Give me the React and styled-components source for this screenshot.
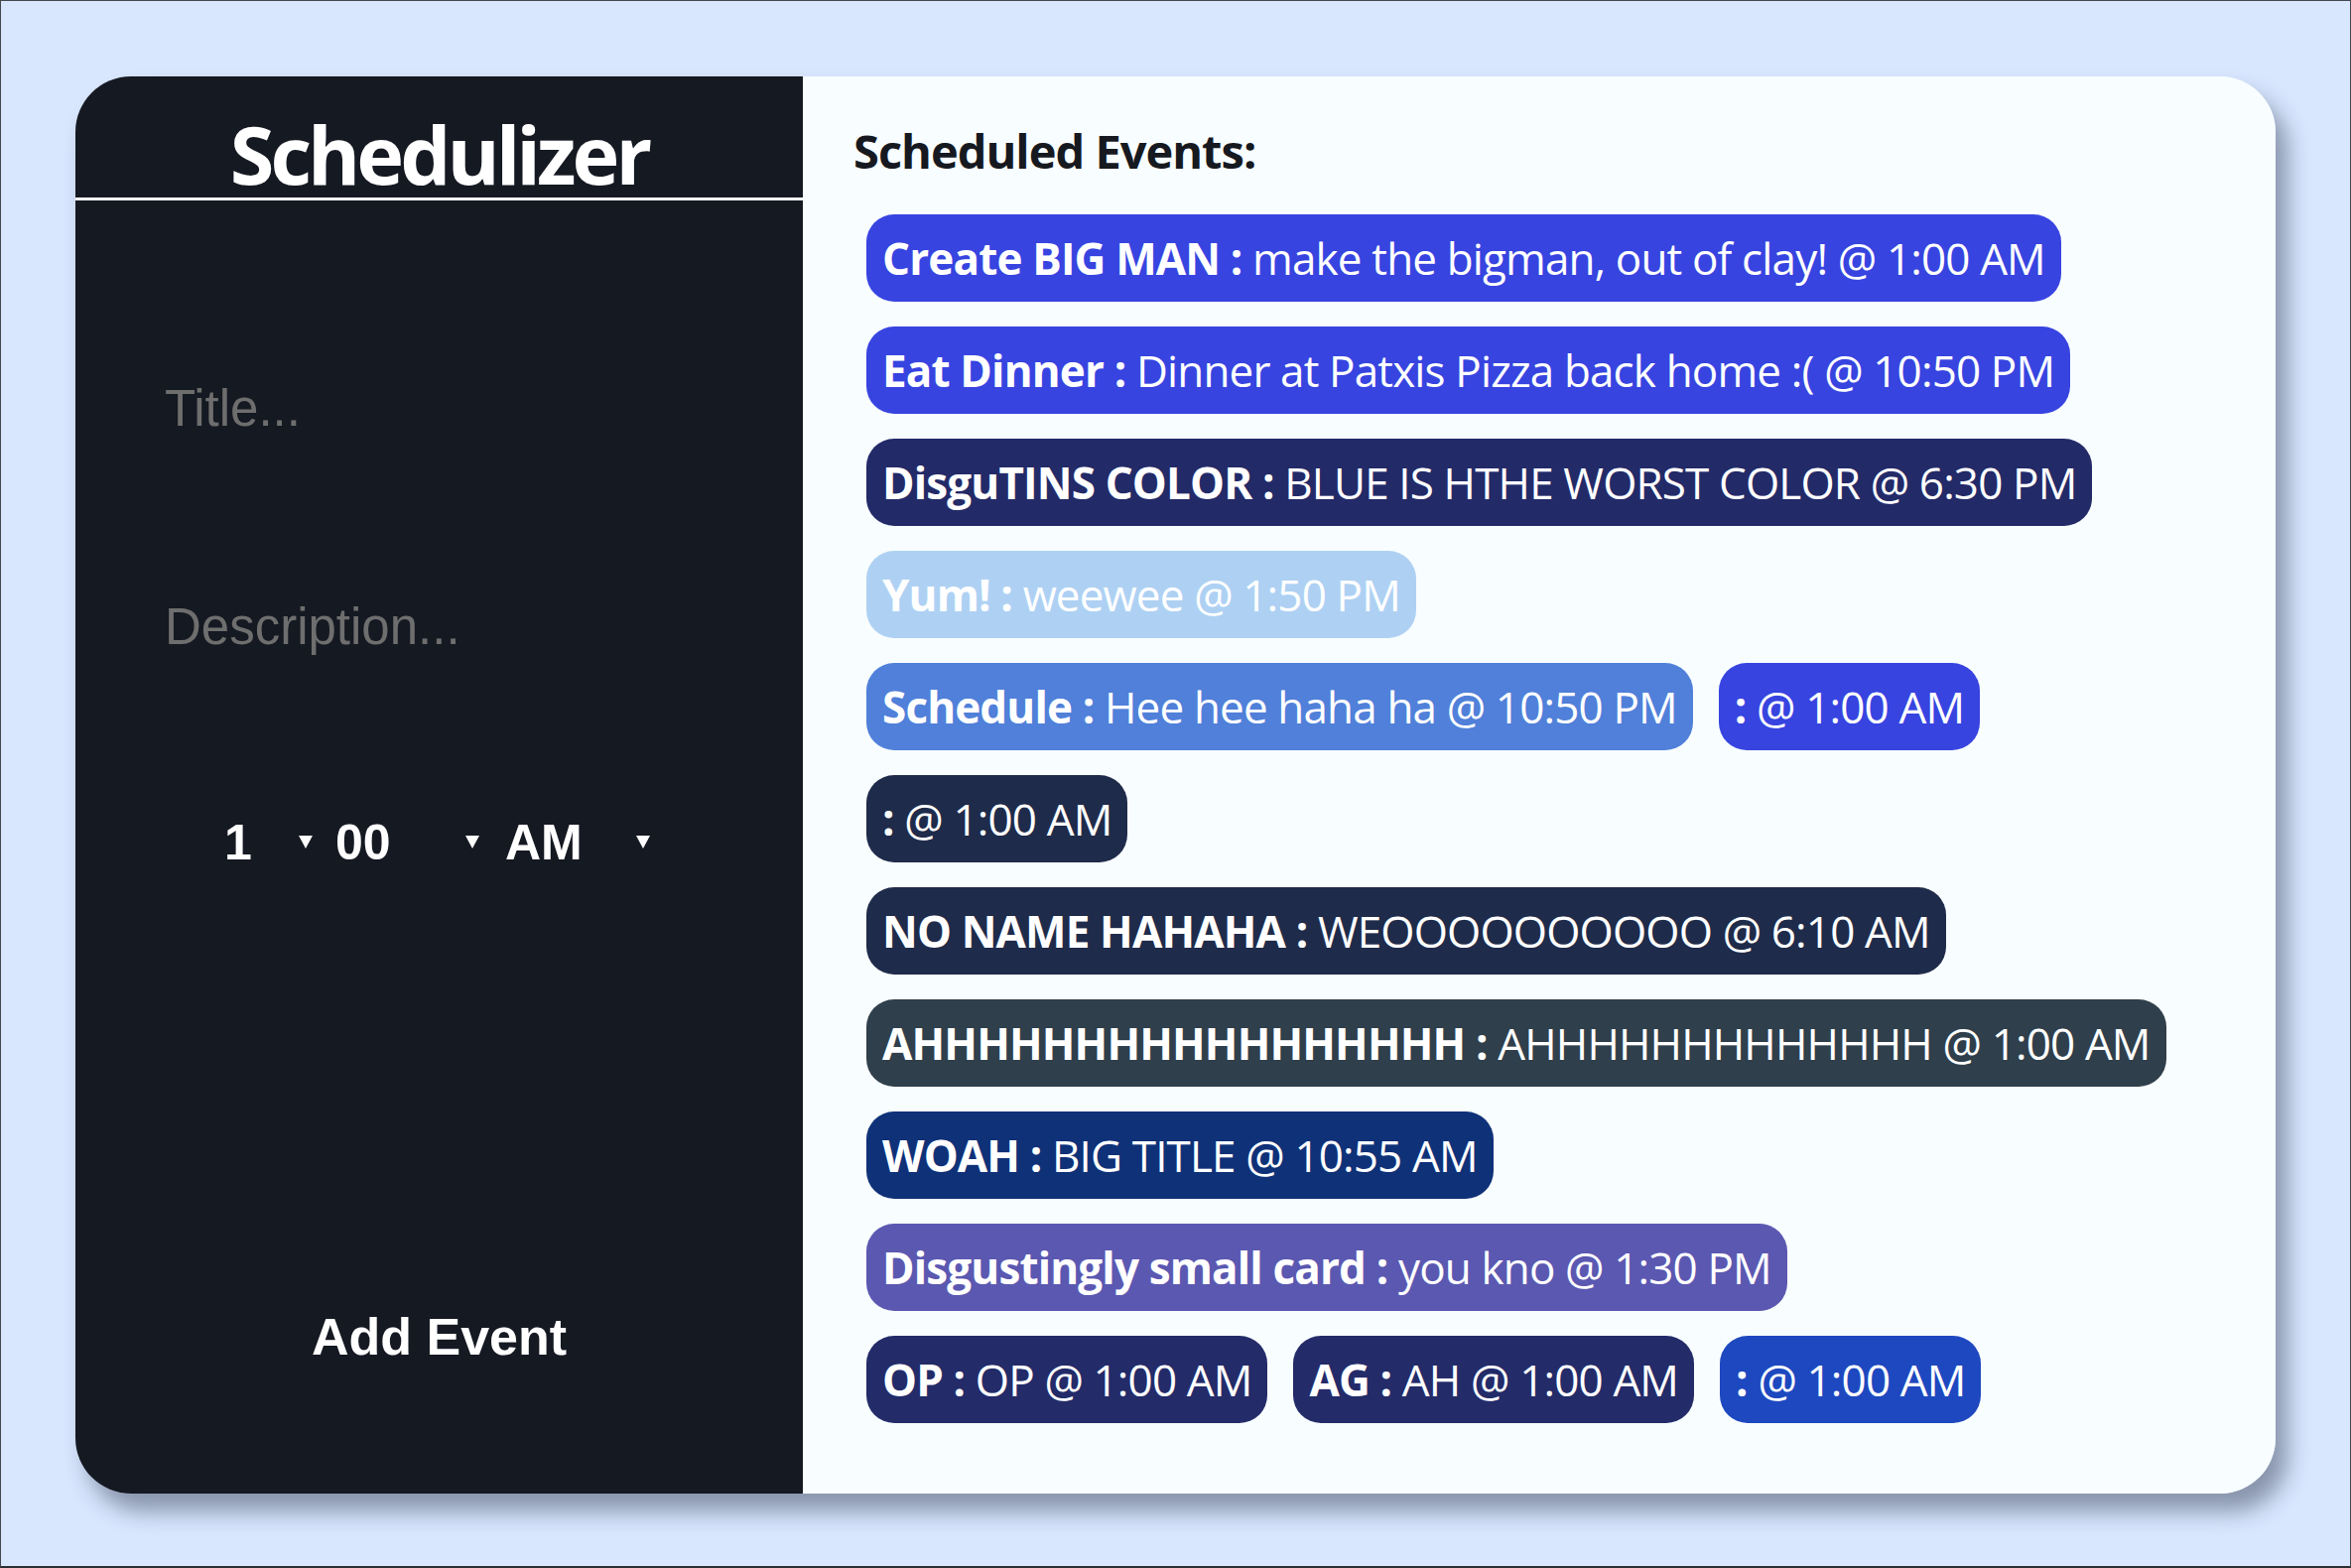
import React from 'react'
import styled, { createGlobalStyle } from 'styled-components'

const GlobalStyle = createGlobalStyle`
    * {
        box-sizing: border-box;
    }
    html, body {
        margin: 0;
        padding: 0;
    }
    body {
        background-color: #d8e6fe;
        font-family: 'Open Sans', 'Noto Sans', sans-serif;
    }
`

const PageStyled = styled.div`
    height: 100vh;
    border: 1px solid #44484e;
    border-bottom: 2px solid #2b2e33;
    display: flex;
    justify-content: center;
    align-items: flex-start;
    padding: 76px 75px 0;
`

const CardStyled = styled.div`
    width: 100%;
    height: 1428px;
    display: grid;
    grid-template-columns: 733px 1fr;
    border-radius: 56px;
    overflow: hidden;
    box-shadow: 12px 18px 22px rgba(40, 52, 74, 0.45);
`

const LeftPanelStyled = styled.div`
    background-color: #151922;
    display: flex;
    flex-direction: column;
`

const HeaderStyled = styled.h1`
    margin: 0;
    padding: 36px 0 2px;
    font-size: 81px;
    line-height: 84px;
    font-weight: 700;
    color: #ffffff;
    text-align: center;
    letter-spacing: -4px;
    border-bottom: 3px solid #ffffff;
`

const TextInputStyled = styled.input`
    margin: ${(props) => props.$top}px 0 0 90px;
    width: 560px;
    height: 58px;
    padding: 0;
    border: none;
    outline: none;
    background: transparent;
    color: #ffffff;
    font-family: 'Liberation Sans', Arial, sans-serif;
    font-size: 51px;

    &::placeholder {
        color: #6e6e6e;
    }
`

const TimeRowStyled = styled.div`
    margin-top: 160px;
    padding-left: 150px;
    display: flex;
    align-items: center;
    height: 58px;
`

const SelectWrapStyled = styled.div`
    position: relative;
    width: ${(props) => props.$width}px;
    margin-right: ${(props) => props.$gap}px;
    height: 58px;
`

const SelectStyled = styled.select`
    appearance: none;
    -webkit-appearance: none;
    width: 100%;
    height: 100%;
    padding: 0;
    border: none;
    outline: none;
    background: transparent;
    color: #ffffff;
    font-family: 'Liberation Sans', Arial, sans-serif;
    font-size: 50px;
    font-weight: 700;
`

const ArrowStyled = styled.span`
    position: absolute;
    right: 1px;
    top: 22px;
    width: 0;
    height: 0;
    border-left: 7px solid transparent;
    border-right: 7px solid transparent;
    border-top: 13px solid #ffffff;
    pointer-events: none;
`

const AddButtonStyled = styled.button`
    margin-top: 439px;
    align-self: center;
    padding: 0;
    border: none;
    background: transparent;
    color: #ffffff;
    font-family: 'Liberation Sans', Arial, sans-serif;
    font-size: 52px;
    font-weight: 700;
    line-height: 60px;
    cursor: pointer;
`

const RightPanelStyled = styled.div`
    background-color: #f8fdff;
    padding: 43px 40px 0 51px;
`

const EventsTitleStyled = styled.h2`
    margin: 0;
    font-size: 47px;
    line-height: 64px;
    font-weight: 700;
    color: #16191f;
    letter-spacing: -1px;
`

const EventListStyled = styled.div`
    margin-top: 32px;
    padding-left: 13px;
    display: flex;
    flex-wrap: wrap;
    gap: 25px 26px;
    max-width: 1358px;
`

const EventCardStyled = styled.div`
    background-color: ${(props) => props.$color};
    color: #ffffff;
    border-radius: 28px;
    padding: 14px 16px;
    font-size: 44px;
    line-height: 60px;
    white-space: nowrap;
    letter-spacing: -0.85px;
`

const EventTitleStyled = styled.span`
    font-weight: 700;
`

const events = [
    { title: 'Create BIG MAN', desc: 'make the bigman, out of clay!', time: '1:00 AM', color: '#3744e0' },
    { title: 'Eat Dinner', desc: 'Dinner at Patxis Pizza back home :(', time: '10:50 PM', color: '#3744e0' },
    { title: 'DisguTINS COLOR', desc: 'BLUE IS HTHE WORST COLOR', time: '6:30 PM', color: '#232a68' },
    { title: 'Yum!', desc: 'weewee', time: '1:50 PM', color: '#aed1f3' },
    { title: 'Schedule', desc: 'Hee hee haha ha', time: '10:50 PM', color: '#5080d9' },
    { title: '', desc: '', time: '1:00 AM', color: '#3744e0' },
    { title: '', desc: '', time: '1:00 AM', color: '#1f2b4a' },
    { title: 'NO NAME HAHAHA', desc: 'WEOOOOOOOOOO', time: '6:10 AM', color: '#1f2b4a' },
    { title: 'AHHHHHHHHHHHHHHHHH', desc: 'AHHHHHHHHHHHHH', time: '1:00 AM', color: '#2f3f4b' },
    { title: 'WOAH', desc: 'BIG TITLE', time: '10:55 AM', color: '#0f3178' },
    { title: 'Disgustingly small card', desc: 'you kno', time: '1:30 PM', color: '#5b58b1' },
    { title: 'OP', desc: 'OP', time: '1:00 AM', color: '#232b69' },
    { title: 'AG', desc: 'AH', time: '1:00 AM', color: '#232b69' },
    { title: '', desc: '', time: '1:00 AM', color: '#1e48bf' },
]

const hours = Array.from({ length: 12 }, (_, i) => String(i + 1))
const minutes = ['00', '05', '10', '15', '20', '25', '30', '35', '40', '45', '50', '55']

function TimeSelect({ options, width, gap }) {
    return (
        <SelectWrapStyled $width={width} $gap={gap}>
            <SelectStyled defaultValue={options[0]}>
                {options.map((o) => (
                    <option key={o} value={o}>
                        {o}
                    </option>
                ))}
            </SelectStyled>
            <ArrowStyled />
        </SelectWrapStyled>
    )
}

function EventCard({ title, desc, time, color }) {
    return (
        <EventCardStyled $color={color}>
            <EventTitleStyled>{title ? `${title} :` : ':'}</EventTitleStyled>
            {desc ? ` ${desc} @ ${time}` : ` @ ${time}`}
        </EventCardStyled>
    )
}

export default function App() {
    return (
        <>
            <GlobalStyle />
            <PageStyled>
                <CardStyled>
                    <LeftPanelStyled>
                        <HeaderStyled>Schedulizer</HeaderStyled>
                        <TextInputStyled $top={180} placeholder="Title..." />
                        <TextInputStyled $top={162} placeholder="Description..." />
                        <TimeRowStyled>
                            <TimeSelect options={hours} width={90} gap={22} />
                            <TimeSelect options={minutes} width={146} gap={25} />
                            <TimeSelect options={['AM', 'PM']} width={147} gap={0} />
                        </TimeRowStyled>
                        <AddButtonStyled>Add Event</AddButtonStyled>
                    </LeftPanelStyled>
                    <RightPanelStyled>
                        <EventsTitleStyled>Scheduled Events:</EventsTitleStyled>
                        <EventListStyled>
                            {events.map((e, i) => (
                                <EventCard key={i} {...e} />
                            ))}
                        </EventListStyled>
                    </RightPanelStyled>
                </CardStyled>
            </PageStyled>
        </>
    )
}
